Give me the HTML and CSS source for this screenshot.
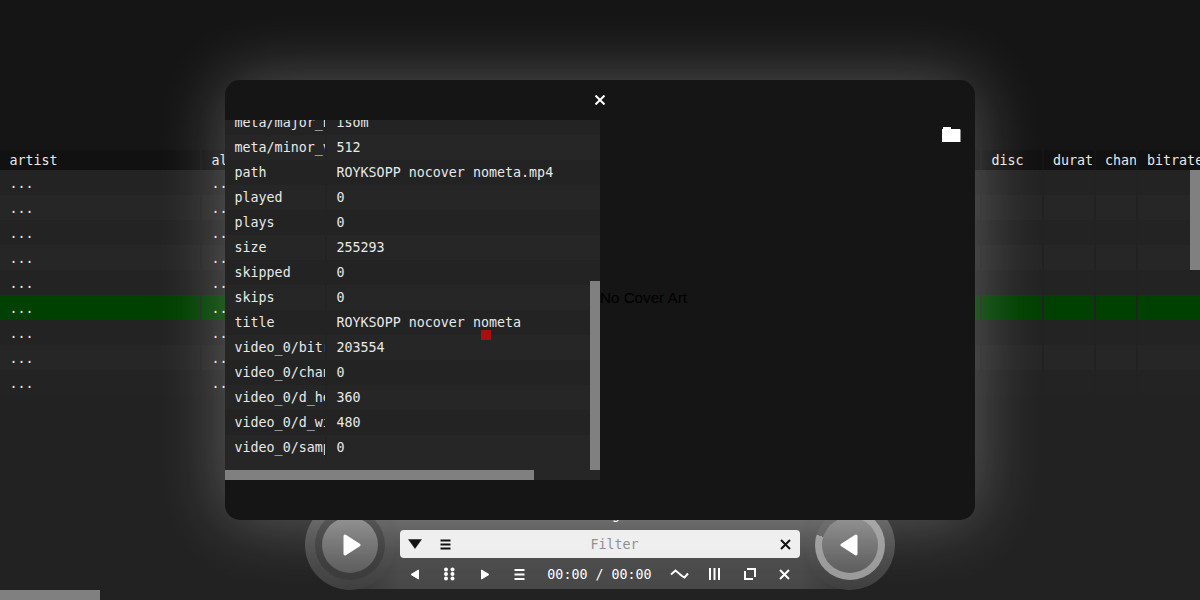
FILE: index.html
```html
<!DOCTYPE html>
<html>
<head>
<meta charset="utf-8">
<title>Player</title>
<link rel="stylesheet" href="styles.css">
</head>
<body>
<div class="app">
  <div class="top"></div>
  <div class="list">
    <div class="row head"><div class="c c1">artist</div><div class="c c2">album</div><div class="c c3"></div><div class="c c4">disc</div><div class="c c5">durat</div><div class="c c6">chan</div><div class="c c7">bitrate</div></div>
    <div class="row"><div class="c c1">...</div><div class="c c2">...</div><div class="c c3"></div><div class="c c4"></div><div class="c c5"></div><div class="c c6"></div><div class="c c7"></div></div>
    <div class="row alt"><div class="c c1">...</div><div class="c c2">...</div><div class="c c3"></div><div class="c c4"></div><div class="c c5"></div><div class="c c6"></div><div class="c c7"></div></div>
    <div class="row"><div class="c c1">...</div><div class="c c2">...</div><div class="c c3"></div><div class="c c4"></div><div class="c c5"></div><div class="c c6"></div><div class="c c7"></div></div>
    <div class="row alt"><div class="c c1">...</div><div class="c c2">...</div><div class="c c3"></div><div class="c c4"></div><div class="c c5"></div><div class="c c6"></div><div class="c c7"></div></div>
    <div class="row"><div class="c c1">...</div><div class="c c2">...</div><div class="c c3"></div><div class="c c4"></div><div class="c c5"></div><div class="c c6"></div><div class="c c7"></div></div>
    <div class="row sel"><div class="c c1">...</div><div class="c c2">...</div><div class="c c3"></div><div class="c c4"></div><div class="c c5"></div><div class="c c6"></div><div class="c c7"></div></div>
    <div class="row"><div class="c c1">...</div><div class="c c2">...</div><div class="c c3"></div><div class="c c4"></div><div class="c c5"></div><div class="c c6"></div><div class="c c7"></div></div>
    <div class="row alt"><div class="c c1">...</div><div class="c c2">...</div><div class="c c3"></div><div class="c c4"></div><div class="c c5"></div><div class="c c6"></div><div class="c c7"></div></div>
    <div class="row"><div class="c c1">...</div><div class="c c2">...</div><div class="c c3"></div><div class="c c4"></div><div class="c c5"></div><div class="c c6"></div><div class="c c7"></div></div>
    <div class="thumb-list"></div>
  </div>
  <div class="bar">
    <div class="mid">
      <div class="song">Loading..</div>
      <div class="filter">
        <button class="fbtn"><svg width="14" height="10" viewBox="0 0 14 10"><path d="M0.500 0.500H13.500L7 9.500Z" fill="#000" stroke="#000" stroke-width="0.500" stroke-linejoin="round"/></svg></button>
        <button class="fbtn"><svg width="11" height="11" viewBox="0 0 11 11"><path d="M0.500 1.500H10.500M0.500 5.500H10.500M0.500 9.500H10.500" stroke="#000" stroke-width="2"/></svg></button>
        <div class="ph">Filter</div>
        <button class="fbtn"><svg width="11" height="11" viewBox="0 0 11 11"><path d="M1 1L10 10M10 1L1 10" stroke="#000" stroke-width="2"/></svg></button>
      </div>
      <div class="tools">
        <button class="tbtn"><svg width="10" height="11" viewBox="0 0 10 11"><path d="M8.500 1V10L1 5.500Z" fill="#fff" stroke="#fff" stroke-linejoin="round"/></svg></button>
        <button class="tbtn"><svg width="11" height="14" viewBox="0 0 11 14"><g fill="#fff"><circle cx="2" cy="2.500" r="2"/><circle cx="8.500" cy="2.500" r="2"/><circle cx="2" cy="7" r="2"/><circle cx="8.500" cy="7" r="2"/><circle cx="2" cy="11.500" r="2"/><circle cx="8.500" cy="11.500" r="2"/></g></svg></button>
        <button class="tbtn"><svg width="10" height="11" viewBox="0 0 10 11"><path d="M1.500 1V10L9 5.500Z" fill="#fff" stroke="#fff" stroke-linejoin="round"/></svg></button>
        <button class="tbtn"><svg width="11" height="11" viewBox="0 0 11 11"><path d="M0.500 1H10.500M0.500 5.500H10.500M0.500 10H10.500" stroke="#fff" stroke-width="2"/></svg></button>
        <div class="time">00:00 / 00:00</div>
        <button class="tbtn"><svg width="19" height="10" viewBox="0 0 19 10"><path d="M1 5.500L5.500 1.500L12 7L14.500 8.500L18 4.500" fill="none" stroke="#fff" stroke-width="2"/></svg></button>
        <button class="tbtn"><svg width="11" height="12" viewBox="0 0 11 12"><path d="M1 0V12M5.500 0V12M10 0V12" stroke="#fff" stroke-width="2"/></svg></button>
        <button class="tbtn"><svg width="12" height="12" viewBox="0 0 12 12"><path d="M3 1H11V9M9 11H1V3" fill="none" stroke="#fff" stroke-width="2"/></svg></button>
        <button class="tbtn"><svg width="11" height="11" viewBox="0 0 11 11"><path d="M1 1L10 10M10 1L1 10" stroke="#fff" stroke-width="2"/></svg></button>
      </div>
    </div>
    <div class="knob left">
      <div class="ring"><div class="face"><svg class="play" width="18" height="22" viewBox="0 0 18 22"><path d="M2 2 L16 11 L2 20 Z" fill="#fff" stroke="#fff" stroke-width="3" stroke-linejoin="round"/></svg></div></div>
    </div>
    <div class="knob right">
      <div class="ring progress"><div class="face"><svg class="back" width="18" height="22" viewBox="0 0 18 22"><path d="M16 2 L2 11 L16 20 Z" fill="#fff" stroke="#fff" stroke-width="3" stroke-linejoin="round"/></svg></div></div>
    </div>
  </div>
  <div class="thumb-page"></div>
</div>

<div class="modal">
  <button class="close"><svg width="10" height="10" viewBox="0 0 10 10"><path d="M0.500 0.500L9.500 9.500M9.500 0.500L0.500 9.500" stroke="#fff" stroke-width="2"/></svg></button>
  <div class="modal-body">
    <div class="info">
      <div class="kv"><div class="k">meta/major_brand</div><div class="v">isom</div></div>
      <div class="kv alt"><div class="k">meta/minor_version</div><div class="v">512</div></div>
      <div class="kv"><div class="k">path</div><div class="v">ROYKSOPP nocover nometa.mp4</div></div>
      <div class="kv alt"><div class="k">played</div><div class="v">0</div></div>
      <div class="kv"><div class="k">plays</div><div class="v">0</div></div>
      <div class="kv alt"><div class="k">size</div><div class="v">255293</div></div>
      <div class="kv"><div class="k">skipped</div><div class="v">0</div></div>
      <div class="kv alt"><div class="k">skips</div><div class="v">0</div></div>
      <div class="kv"><div class="k">title</div><div class="v">ROYKSOPP nocover nometa</div></div>
      <div class="kv alt"><div class="k">video_0/bitrate</div><div class="v">203554</div></div>
      <div class="kv"><div class="k">video_0/channels</div><div class="v">0</div></div>
      <div class="kv alt"><div class="k">video_0/d_height</div><div class="v">360</div></div>
      <div class="kv"><div class="k">video_0/d_width</div><div class="v">480</div></div>
      <div class="kv alt"><div class="k">video_0/sample_rate</div><div class="v">0</div></div>
      <div class="thumb-v"></div>
      <div class="thumb-h"></div>
      <div class="red"></div>
    </div>
    <div class="cover">
      <div class="nocover">No Cover Art</div>
      <svg class="folder" width="18" height="15" viewBox="0 0 18 15"><path d="M1 0H9V2H18V15H0V2H1Z" fill="#fff"/><path d="M18.500 2.500V15" stroke="#888" stroke-width="1"/></svg>
    </div>
  </div>
</div>
</body>
</html>
```
FILE: styles.css
```css
* { box-sizing: border-box; }
html, body { margin: 0; height: 100%; overflow: hidden; }
body { background: #222; color: #e8e8e8; font: 13.333px/1 "DejaVu Sans Mono", monospace; }
button { all: unset; box-sizing: border-box; display: flex; align-items: center; justify-content: center; }

.app { position: relative; height: 600px; display: flex; flex-direction: column; }
.top { height: 150px; background: #151515; flex: none; }
.list { position: relative; height: 345px; flex: none; }
.row { display: flex; gap: 2px; height: 25px; overflow: hidden; background: #222; }
.head { height: 20px; background: #151515; }
.c { flex: none; padding: 1px 10px 0 9.500px; line-height: 25px; overflow: hidden; white-space: nowrap; background: #232323; }
.row.alt .c { background: #262626; }
.head .c { background: #111; line-height: 20px; }
.row.sel .c { background: #004000; }
.c1 { width: 200px; }
.c2 { width: 200px; }
.c3 { width: 576px; }
.c4 { width: 60px; }
.c5 { width: 50px; padding-left: 9px; padding-right: 0; }
.c6 { width: 40px; padding-left: 9px; padding-right: 0; }
.c7 { width: 80px; padding-left: 9px; padding-right: 0; }
.thumb-list { position: absolute; right: 0; top: 20px; width: 10px; height: 100px; background: #808080; }

.bar { position: absolute; left: 305px; width: 590px; top: 500px; height: 90px; display: flex; justify-content: center; }
.knob { position: absolute; top: 0; width: 90px; height: 90px; border-radius: 50%; background: linear-gradient(#565656, #404040); display: flex; align-items: center; justify-content: center; }
.knob.left { left: 0; }
.knob.right { right: 0; }
.ring { width: 70px; height: 70px; border-radius: 50%; background: #3a3a3a; display: flex; align-items: center; justify-content: center; }
.ring.progress { background: conic-gradient(from 287deg, #585858 0 45deg, #9a9a9a 45deg 360deg); }
.face { width: 56px; height: 56px; border-radius: 50%; background: linear-gradient(#808080, #5c5c5c); display: flex; align-items: center; justify-content: center; }
.play { margin-left: 3px; }
.back { margin-left: -3px; }
.mid { width: 500px; height: 89px; flex: none; padding: 0 50px; background: linear-gradient(90deg, rgba(34,34,34,.5), transparent 10%, transparent 90%, rgba(34,34,34,.5)), linear-gradient(#5c5c5c, #484848 60%, #484848); }
.song { height: 30px; line-height: 30px; text-align: center; color: #fff; overflow: hidden; }
.filter { height: 28px; border-radius: 4px; background: #eee; display: flex; align-items: center; color: #000; }
.fbtn { width: 30px; height: 28px; }
.ph { flex: 1; text-align: center; color: #888; padding-top: 1px; padding-right: 1px; }
.tools { height: 32px; display: flex; align-items: center; margin-left: -3px; }
.tbtn { width: 35px; height: 32px; flex: none; }
.time { width: 125px; text-align: center; color: #fff; flex: none; padding-top: 1px; }
.thumb-page { position: absolute; left: 0; bottom: 0; width: 100px; height: 10px; background: #808080; }

.modal { position: absolute; left: 225px; top: 80px; width: 750px; height: 440px; border-radius: 15px; background: #151515; box-shadow: 0 0 70px rgba(255,255,255,.28); display: flex; flex-direction: column; }
.close { height: 40px; flex: none; }
.modal-body { display: flex; height: 360px; }
.info { position: relative; width: 375px; height: 360px; overflow: hidden; background: #262626; }
.kv { display: flex; height: 25px; gap: 2px; background: #232323; }
.kv:first-child { margin-top: -10px; }
.kv.alt .k, .kv.alt .v { background: #262626; }
.k { width: 100px; flex: none; padding: 0 0 0 9.500px; line-height: 25px; overflow: hidden; white-space: nowrap; }
.v { flex: 1; padding-left: 9.500px; line-height: 25px; white-space: nowrap; overflow: hidden; }
.thumb-v { position: absolute; right: 0; top: 161px; width: 10px; height: 189px; background: #808080; }
.thumb-h { position: absolute; left: 0; bottom: 0; width: 309px; height: 10px; background: #808080; }
.red { position: absolute; left: 256px; top: 210px; width: 10px; height: 10px; background: #a51010; }
.cover { position: relative; flex: 1; display: flex; align-items: center; font: 15.200px/1 "Liberation Sans", Arial, sans-serif; color: #000; }
.nocover { margin-top: -4px; }
.folder { position: absolute; right: 15px; top: 7px; overflow: visible; }
```
